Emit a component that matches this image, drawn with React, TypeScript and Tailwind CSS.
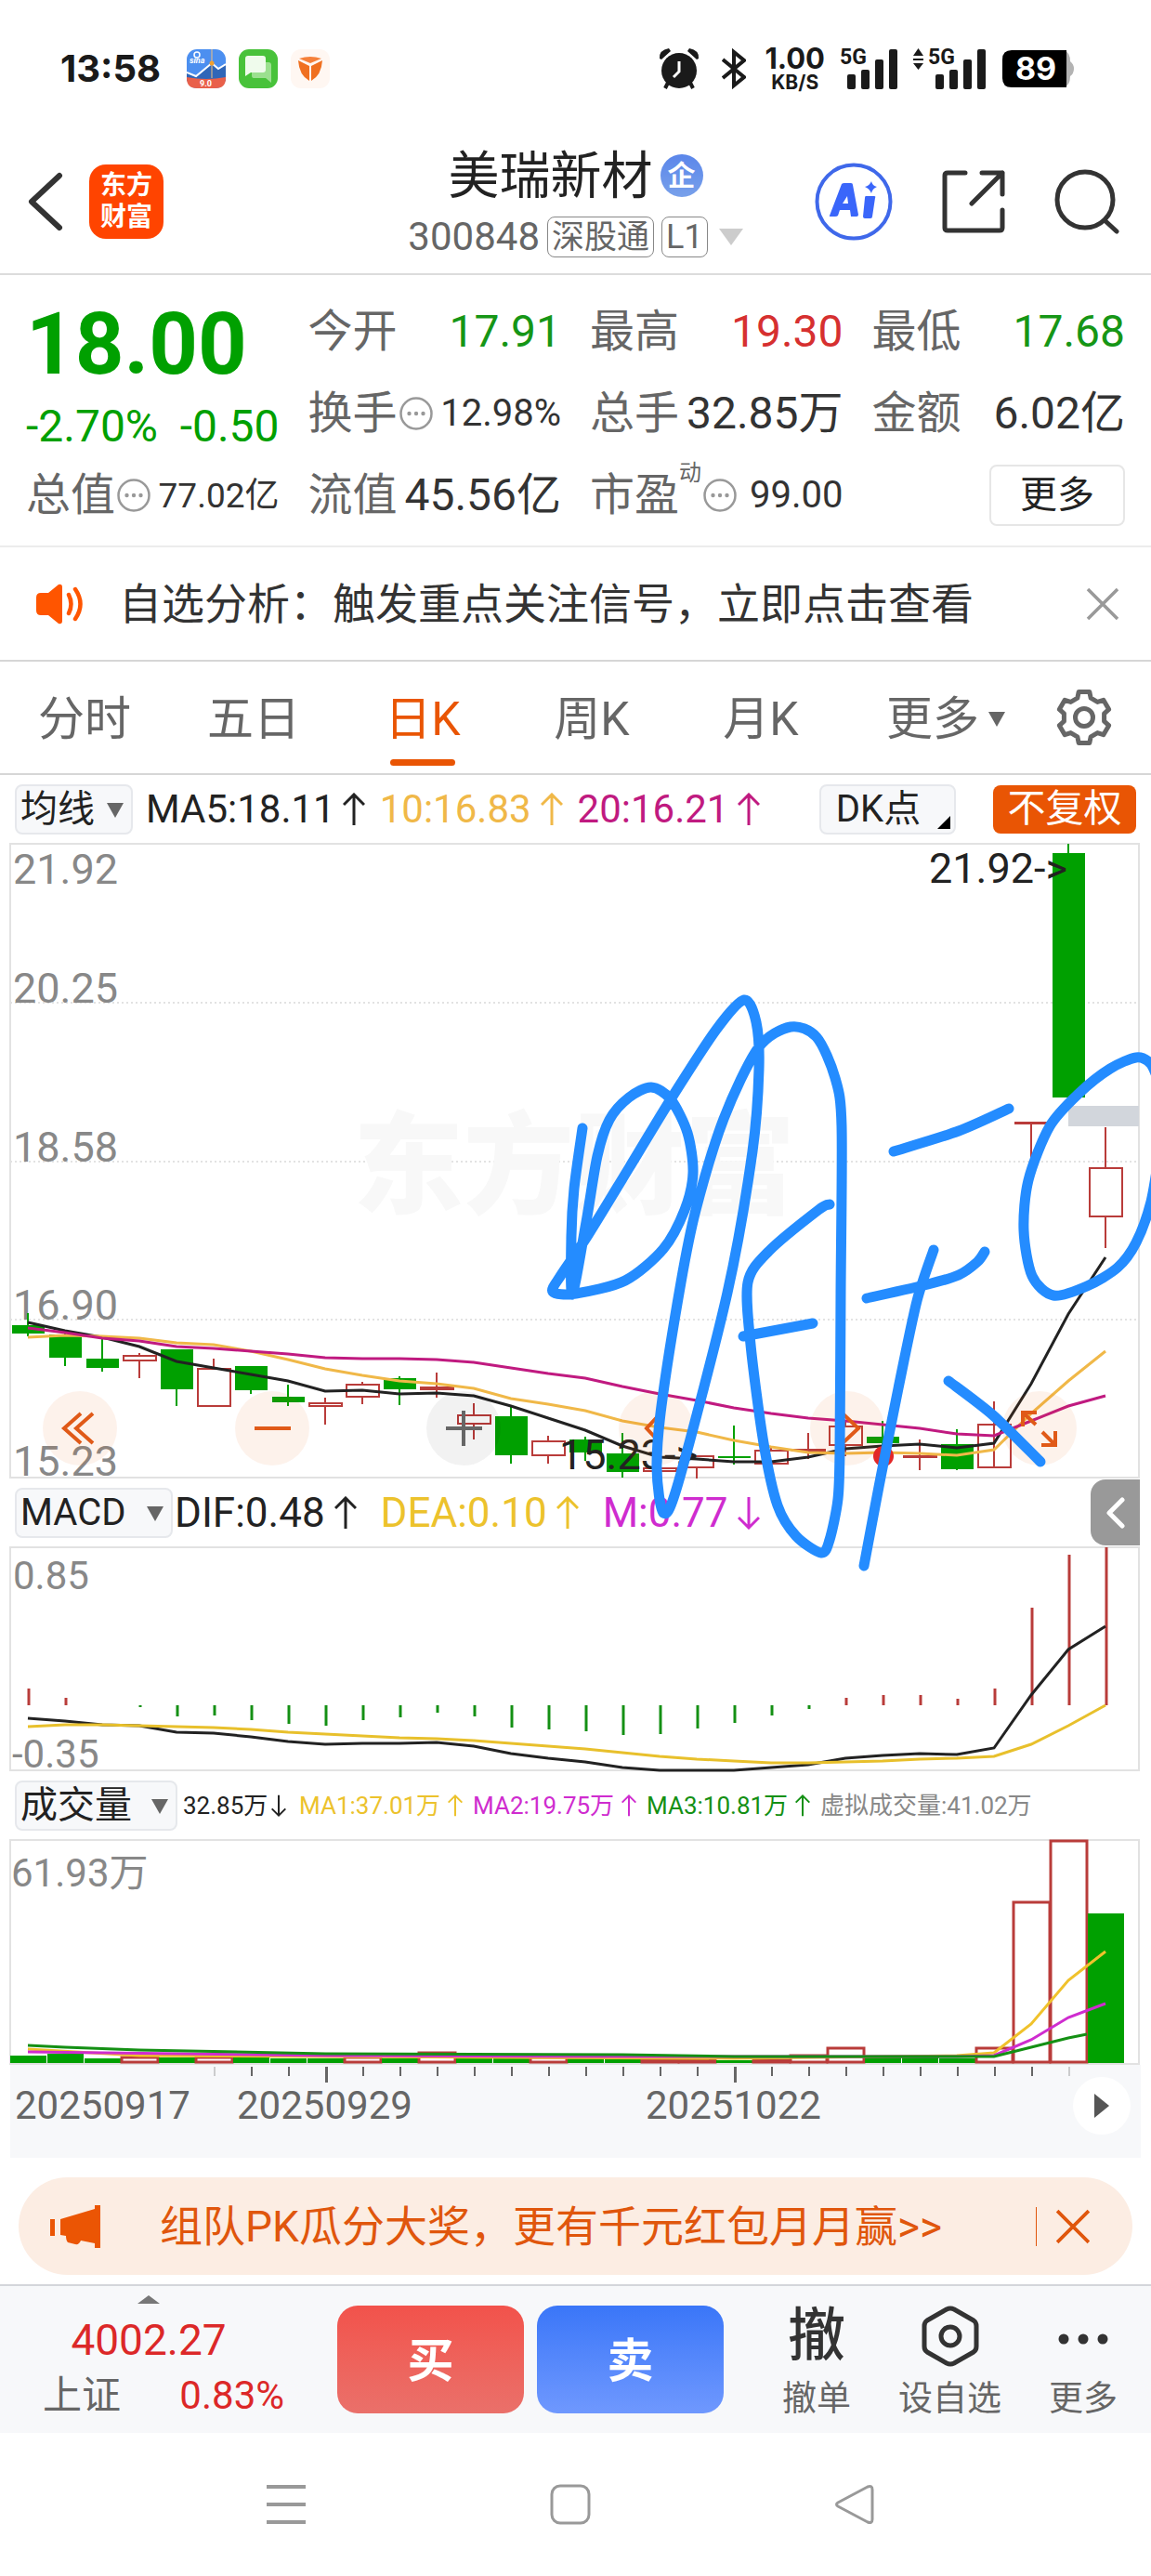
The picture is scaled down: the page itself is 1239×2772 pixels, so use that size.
import type { ReactNode } from 'react'

type Point = [number, number]

const GREEN = '#00a000'
const RED = '#b93c3a'

const xAt = (i: number) => 30 + i * 40

// [up, bodyTop, bodyBottom, wickTop, wickBottom]
const candles: [boolean, number, number, number, number][] = [
  [false, 1426, 1435, 1413, 1438],
  [false, 1436, 1461, 1433, 1470],
  [false, 1462, 1472, 1441, 1476],
  [true, 1459, 1464, 1456, 1483],
  [false, 1452, 1495, 1452, 1513],
  [true, 1473, 1513, 1462, 1513],
  [false, 1470, 1496, 1470, 1500],
  [false, 1503, 1509, 1490, 1513],
  [true, 1510, 1513, 1504, 1533],
  [true, 1490, 1503, 1487, 1511],
  [false, 1483, 1495, 1481, 1512],
  [true, 1493, 1495, 1477, 1504],
  [true, 1523, 1532, 1510, 1549],
  [false, 1524, 1566, 1514, 1575],
  [true, 1551, 1566, 1545, 1575],
  [false, 1549, 1563, 1546, 1572],
  [false, 1564, 1584, 1542, 1590],
  [true, 1580, 1583, 1580, 1583],
  [true, 1567, 1579, 1567, 1591],
  [false, 1567, 1569, 1534, 1576],
  [true, 1561, 1575, 1558, 1581],
  [true, 1560, 1561, 1542, 1570],
  [true, 1535, 1555, 1530, 1567],
  [false, 1546, 1553, 1529, 1558],
  [true, 1567, 1568, 1549, 1582],
  [false, 1554, 1581, 1538, 1582],
  [true, 1533, 1579, 1508, 1533],
  [true, 1208, 1209, 1208, 1278],
  [false, 918, 1181, 908, 1183],
  [true, 1257, 1309, 1213, 1343],
]

const ma5 = [1423, 1432, 1439, 1449, 1465, 1472, 1479, 1486, 1497, 1496, 1500, 1499, 1502, 1513, 1526, 1539, 1556, 1568, 1570, 1573, 1573, 1568, 1559, 1556, 1554, 1558, 1553, 1489, 1414, 1353]
const ma10 = [1439, 1437, 1438, 1440, 1445, 1447, 1454, 1463, 1473, 1480, 1486, 1489, 1494, 1505, 1511, 1518, 1529, 1536, 1541, 1550, 1557, 1563, 1564, 1563, 1564, 1566, 1560, 1521, 1486, 1454]
const ma20 = [1429, 1434, 1440, 1443, 1449, 1451, 1454, 1457, 1461, 1462, 1462, 1463, 1466, 1472, 1478, 1483, 1492, 1500, 1507, 1515, 1521, 1526, 1529, 1533, 1537, 1543, 1545, 1529, 1513, 1502]

const macdBars = [1817, 1827, 1835, 1837, 1847, 1846, 1851, 1855, 1857, 1851, 1848, 1843, 1847, 1859, 1861, 1863, 1867, 1866, 1860, 1854, 1846, 1839, 1827, 1824, 1824, 1828, 1817, 1730, 1673, 1665]
const dif = [1849, 1852, 1856, 1857, 1864, 1865, 1869, 1874, 1877, 1876, 1876, 1875, 1879, 1887, 1892, 1896, 1902, 1905, 1905, 1905, 1902, 1899, 1892, 1889, 1887, 1888, 1881, 1824, 1775, 1750]
const dea = [1858, 1856, 1856, 1857, 1858, 1859, 1861, 1864, 1866, 1868, 1870, 1871, 1873, 1876, 1879, 1882, 1886, 1890, 1893, 1895, 1897, 1897, 1896, 1895, 1893, 1892, 1890, 1877, 1857, 1835]

const volumes: [boolean, number][] = [
  [false, 2212], [false, 2210], [false, 2215], [true, 2214], [false, 2214], [true, 2214],
  [false, 2214], [false, 2215], [false, 2215], [true, 2214], [false, 2215], [true, 2209],
  [false, 2214], [false, 2214], [true, 2214], [false, 2215], [false, 2215], [true, 2216],
  [true, 2216], [false, 2217], [true, 2217], [true, 2212], [true, 2204], [false, 2214],
  [false, 2214], [false, 2215], [true, 2204], [true, 2047], [true, 1981], [false, 2059],
]

const volLines: { color: string; points: Point[] }[] = [
  { color: '#f0c22c', points: [[30, 2205], [150, 2212], [350, 2213], [790, 2215], [1030, 2212], [1070, 2209], [1110, 2178], [1150, 2131], [1190, 2100]] },
  { color: '#cf2ccf', points: [[30, 2208], [350, 2212], [670, 2213], [1030, 2213], [1070, 2212], [1110, 2195], [1150, 2171], [1190, 2156]] },
  { color: '#149014', points: [[30, 2201], [70, 2203], [150, 2206], [350, 2210], [670, 2211], [790, 2213], [1070, 2213], [1110, 2203], [1150, 2193], [1170, 2189]] },
]

const strokes: Point[][] = [
  [
    [627, 1214], [618, 1279], [615, 1330], [616, 1393], [631, 1315], [643, 1244], [656, 1205], [677, 1181],
    [701, 1170], [722, 1183], [740, 1219], [746, 1262], [737, 1302], [714, 1344], [673, 1378], [620, 1392],
    [595, 1390], [604, 1372], [633, 1329], [677, 1257], [722, 1183], [771, 1108], [801, 1076], [814, 1100],
    [817, 1150], [810, 1239], [783, 1391], [730, 1596], [714, 1628], [707, 1580], [712, 1513], [733, 1380],
    [749, 1302], [779, 1204], [816, 1128], [851, 1105], [879, 1116], [899, 1160], [906, 1212], [905, 1391],
    [904, 1560], [902, 1613], [893, 1657], [884, 1671], [857, 1653], [837, 1620], [822, 1553], [808, 1447],
    [805, 1380], [828, 1346], [881, 1302], [893, 1296],
  ],
  [[800, 1438], [875, 1424]],
  [[962, 1239], [1032, 1217], [1086, 1193]],
  [[933, 1397], [999, 1382], [1032, 1372], [1052, 1358], [1060, 1347]],
  [[1005, 1345], [987, 1400], [967, 1494], [946, 1600], [930, 1685]],
  [[1021, 1486], [1069, 1523], [1120, 1573]],
  [
    [1246, 1160], [1238, 1144], [1223, 1138], [1195, 1150], [1162, 1176], [1130, 1212], [1107, 1270],
    [1102, 1324], [1111, 1373], [1134, 1394], [1170, 1384], [1203, 1364], [1223, 1337], [1239, 1293], [1248, 1240],
  ],
]

const toPoints = (ys: number[]) => ys.map((y, i) => `${xAt(i)},${y}`).join(' ')

// Catmull-Rom through all points
function smooth(pts: Point[]) {
  let d = `M${pts[0][0]} ${pts[0][1]}`
  for (let i = 0; i < pts.length - 1; i++) {
    const p0 = pts[i - 1] ?? pts[i]
    const p1 = pts[i]
    const p2 = pts[i + 1]
    const p3 = pts[i + 2] ?? p2
    d += `C${p1[0] + (p2[0] - p0[0]) / 7} ${p1[1] + (p2[1] - p0[1]) / 7} ${p2[0] - (p3[0] - p1[0]) / 7} ${p2[1] - (p3[1] - p1[1]) / 7} ${p2[0]} ${p2[1]}`
  }
  return d
}

const gearPath = (() => {
  const pts: string[] = []
  for (let k = 0; k < 6; k++) {
    const base = k * 60 - 90
    for (const [deg, r] of [[-19, 22], [-12, 28], [12, 28], [19, 22]]) {
      const a = ((base + deg) * Math.PI) / 180
      pts.push(`${(32 + r * Math.cos(a)).toFixed(1)} ${(32 + r * Math.sin(a)).toFixed(1)}`)
    }
  }
  return `M${pts.join('L')}Z`
})()

function Arrow({ down = false, small = false }: { down?: boolean; small?: boolean }) {
  return (
    <svg
      viewBox="0 0 24 36"
      className={small ? 'w-4 h-[30px] shrink-0' : 'w-6 h-9 shrink-0'}
      fill="none"
      stroke="currentColor"
      strokeWidth="3"
    >
      {down ? <path d="M12 1V34M1 23L12 34L23 23" /> : <path d="M12 35V2M1 13L12 2L23 13" />}
    </svg>
  )
}

function Dots() {
  return (
    <svg viewBox="0 0 36 36" className="w-9 h-9 ml-[2px] shrink-0" fill="#999">
      <circle cx="18" cy="18" r="16.5" fill="none" stroke="#999" strokeWidth="2.5" />
      <circle cx="10.5" cy="18" r="2.2" />
      <circle cx="18" cy="18" r="2.2" />
      <circle cx="25.5" cy="18" r="2.2" />
    </svg>
  )
}

function Cross({ className }: { className: string }) {
  return (
    <svg viewBox="0 0 36 36" className={className} fill="none" stroke="currentColor" strokeWidth="3.5">
      <path d="M2 2L34 34M34 2L2 34" />
    </svg>
  )
}

function Picker({ label, options, className }: { label: string; options: string[]; className: string }) {
  return (
    <div className={`relative shrink-0 ${className}`}>
      <select
        aria-label={label}
        className="appearance-none w-full h-[54px] pl-1 rounded-lg border-2 border-[#e6e8ec] bg-[#f7f8fa] text-[40px] leading-[50px] text-[#222]"
      >
        {options.map((o) => (
          <option key={o}>{o}</option>
        ))}
      </select>
      <svg viewBox="0 0 18 16" className="absolute right-[10px] top-5 w-[18px] h-4 pointer-events-none" fill="#666">
        <path d="M0 0H18L9 16Z" />
      </svg>
    </div>
  )
}

function Stat({ label, value, tone = 'text-[#333]', size = 'text-[48px]', dots = false, sup }: {
  label: string
  value: string
  tone?: string
  size?: string
  dots?: boolean
  sup?: string
}) {
  return (
    <div className="flex items-center h-[88px] leading-none whitespace-nowrap">
      <span className="text-[48px] text-[#666]">{label}</span>
      {sup && <span className="text-[24px] text-[#666] self-start pt-2">{sup}</span>}
      {dots && <Dots />}
      <span className={`ml-auto ${size} ${tone}`}>{value}</span>
    </div>
  )
}

function Signal({ roaming = false }: { roaming?: boolean }) {
  return (
    <div className="relative w-20 h-11 shrink-0">
      <svg viewBox="0 0 80 44" className="w-20 h-11" fill="#1a1a1a">
        {roaming && <path d="M0 8L5.500 0L11 8ZM0 11H11V13H0ZM0 16H11L5.500 23Z" />}
        <rect x="24" y="28" width="9" height="16" rx="2" />
        <rect x="39" y="23" width="9" height="21" rx="2" />
        <rect x="54" y="12" width="9" height="32" rx="2" />
        <rect x="69" y="1" width="9" height="43" rx="2" />
      </svg>
      <span className="absolute left-4 top-0 text-[23px] leading-5 font-bold">5G</span>
    </div>
  )
}

function StatusBar() {
  return (
    <div className="flex items-center h-[148px] pl-[65px] pr-[82px] text-[#1a1a1a] leading-none">
      <span className="font-[Inter] text-[40px] font-bold">13:58</span>
      <div className="flex gap-[14px] ml-7">
        <svg viewBox="0 0 42 42" className="w-[42px] h-[42px]">
          <rect width="42" height="42" rx="11" fill="#4c8ff0" />
          <path d="M0 25L10 30L27 16L34 21L42 16V34H0Z" fill="#2f66b8" />
          <path d="M0 30Q21 34 42 30V31Q42 42 31 42H11Q0 42 0 31Z" fill="#e9604a" />
          <path d="M27 0V31" stroke="#f0c080" strokeWidth="1" />
          <path d="M0 25L10 29L27 15L34 21L42 16" fill="none" stroke="#fff" strokeWidth="2" />
          <circle cx="27" cy="15" r="2.500" fill="#f0a030" />
          <circle cx="11" cy="6" r="3" fill="none" stroke="#fff" strokeWidth="1.500" />
          <text x="3" y="15" fontSize="9" fontWeight="700" fontStyle="italic" fill="#fff">sina</text>
          <text x="14" y="40" fontSize="9" fontWeight="700" fill="#fff">9.0</text>
        </svg>
        <svg viewBox="0 0 42 42" className="w-[42px] h-[42px]">
          <rect width="42" height="42" rx="11" fill="#48c23a" />
          <path d="M16 14H32Q35 14 35 17V36L29 31H16Q14 31 14 28V16Z" fill="#9be08f" />
          <path d="M10 7H26Q29 7 29 10V22Q29 25 26 25H13L7 29V10Q7 7 10 7Z" fill="#effbec" />
        </svg>
        <svg viewBox="0 0 42 42" className="w-[42px] h-[42px]">
          <rect width="42" height="42" rx="11" fill="#fff7f2" />
          <path d="M9 10Q21 6 33 10L21 15Z" fill="#f5803a" />
          <path d="M8 12L20 18V34Q9 28 8 12Z" fill="#f07020" />
          <path d="M34 12L22 18V34Q33 28 34 12Z" fill="#f07020" />
        </svg>
      </div>

      <svg viewBox="0 0 44 44" className="w-11 h-11 ml-auto" fill="#1a1a1a">
        <path d="M1 11Q0 2 11 0L13 3L3 12ZM43 11Q44 2 33 0L31 3L41 12Z" />
        <circle cx="22" cy="24" r="19" />
        <path d="M10 37L7 43M34 37L37 43" stroke="#1a1a1a" strokeWidth="4" />
        <path d="M22 14V25L16 31" fill="none" stroke="#fff" strokeWidth="3" />
      </svg>
      <svg viewBox="0 0 26 44" className="w-[26px] h-11 ml-6" fill="none" stroke="#1a1a1a" strokeWidth="4">
        <path d="M1 12L24 31L13 40V4L24 13L1 32" />
      </svg>
      <div className="flex flex-col items-center ml-5 font-[Inter] font-bold">
        <span className="text-[31px] leading-[25px]">1.00</span>
        <span className="text-[21px] leading-[19px] pt-1">KB/S</span>
      </div>
      <div className="flex items-center gap-[15px]">
        <Signal />
        <Signal roaming />
      </div>
      <svg viewBox="0 0 78 40" className="w-[78px] h-10 ml-4">
        <path d="M60 0H66Q73 2 73 12Q77 15 77 20Q77 25 73 28Q73 38 66 40H60Z" fill="#b3b3b3" />
        <path d="M10 0H69V40H10Q0 40 0 30V10Q0 0 10 0Z" />
        <text x="36" y="32" fontSize="34" fontWeight="700" fill="#fff" textAnchor="middle" fontFamily="Inter">89</text>
      </svg>
    </div>
  )
}

function Header() {
  return (
    <header className="grid grid-cols-[1fr_auto_1fr] items-center h-[148px] border-b-2 border-[#dcdcdc] px-[30px] pb-2">
      <div className="flex items-center gap-7">
        <button aria-label="返回">
          <svg viewBox="0 0 38 64" className="w-[38px] h-16" fill="none" stroke="#333" strokeWidth="6" strokeLinecap="round" strokeLinejoin="round">
            <path d="M34 4L4 32L34 60" />
          </svg>
        </button>
        <a href="#home" className="flex flex-col items-center justify-center w-20 h-20 rounded-[18px] bg-[#ff4400] text-white text-[28px] leading-[34px] font-bold">
          <span>东方</span>
          <span>财富</span>
        </a>
      </div>

      <div className="flex flex-col items-center pt-[6px] leading-none">
        <div className="flex items-center gap-2">
          <h1 className="text-[55px] leading-[70px] text-[#222]">美瑞新材</h1>
          <span className="flex items-center justify-center w-[46px] h-[46px] rounded-full bg-linear-to-b from-[#5b86ea] to-[#78a0ea] text-white text-[30px] font-bold">企</span>
        </div>
        <div className="flex items-center gap-2 h-[62px] text-[#666]">
          <span className="text-[42px]">300848</span>
          <span className="flex items-center h-11 px-1 border border-[#888] rounded-lg text-[35px]">深股通</span>
          <span className="flex items-center h-11 px-1 border border-[#888] rounded-lg text-[36px]">L1</span>
          <svg viewBox="0 0 26 18" className="w-[26px] h-[18px] ml-1" fill="#ccc">
            <path d="M0 0H26L13 18Z" />
          </svg>
        </div>
      </div>

      <div className="flex items-center justify-end gap-[53px] pr-1">
        <button aria-label="Ai">
          <svg viewBox="0 0 84 84" className="w-[84px] h-[84px]" fill="#3a66fa">
            <circle cx="42" cy="42" r="39.500" fill="none" stroke="#3f68ea" strokeWidth="4" />
            <path fillRule="evenodd" d="M16 57L29 23Q30 22 32 22H39Q41 22 41 24L47 56Q47 58 45 58H39L38 51H27L25 57Q24 58 22 58H17Q15 58 16 57ZM30 44H36L35 36Z" />
            <path d="M55 36H64Q66 36 65 38L62 58Q62 60 60 60H54Q52 60 52 58L54 38Q54 36 55 36Z" />
            <path d="M61 20Q62 25 67 26Q62 28 61 33Q59 28 54 26Q59 25 61 20Z" />
          </svg>
        </button>
        <button aria-label="分享">
          <svg viewBox="0 0 68 68" className="w-[68px] h-[68px]" fill="none" stroke="#333" strokeWidth="5" strokeLinecap="round" strokeLinejoin="round">
            <path d="M25 3H6Q3 3 3 6V62Q3 65 6 65H62Q65 65 65 62V43M43 3H65V26M65 3L32 36" />
          </svg>
        </button>
        <button aria-label="搜索">
          <svg viewBox="0 0 70 70" className="w-[70px] h-[70px]" fill="none" stroke="#333" strokeWidth="5" strokeLinecap="round">
            <circle cx="33" cy="33" r="30" />
            <path d="M54 55L67 67" />
          </svg>
        </button>
      </div>
    </header>
  )
}

function Quote() {
  return (
    <section className="grid grid-cols-4 gap-x-[31px] px-7 pt-[17px] pb-[10px] border-b-2 border-[#ececec]">
      <div className="row-span-2 text-[#00a000] whitespace-nowrap">
        <div className="text-[92px] leading-[116px] font-bold">18.00</div>
        <div className="flex justify-between text-[48px] leading-[60px]">
          <span>-2.70%</span>
          <span>-0.50</span>
        </div>
      </div>
      <Stat label="今开" value="17.91" tone="text-[#169616]" />
      <Stat label="最高" value="19.30" tone="text-[#d63030]" />
      <Stat label="最低" value="17.68" tone="text-[#169616]" />
      <Stat label="换手" value="12.98%" size="text-[40px]" dots />
      <Stat label="总手" value="32.85万" />
      <Stat label="金额" value="6.02亿" />
      <Stat label="总值" value="77.02亿" size="text-[37px]" dots />
      <Stat label="流值" value="45.56亿" />
      <Stat label="市盈" value="99.00" size="text-[40px]" sup="动" dots />
      <div className="flex items-center justify-end h-[88px]">
        <button className="w-[146px] h-[66px] rounded-lg border-2 border-[#e6e6e6] text-[40px] leading-none text-[#222]">更多</button>
      </div>
    </section>
  )
}

function Notice() {
  return (
    <div className="flex items-center h-[123px] pl-[38px] pr-[34px] border-b-2 border-[#d6d6d6] text-[#333]">
      <svg viewBox="0 0 54 44" className="w-[54px] h-11 shrink-0" fill="#ff5500">
        <path d="M6 10H14L25 1Q29 0 29 4V40Q29 44 25 43L14 34H6Q1 34 1 29V15Q1 10 6 10Z" />
        <path d="M36 12Q41 22 36 32M43 6Q54 22 43 38" fill="none" stroke="#ff5500" strokeWidth="4.500" strokeLinecap="round" />
      </svg>
      <a href="#signal" className="flex-1 ml-9 text-[46px] leading-none whitespace-nowrap">自选分析：触发重点关注信号，立即点击查看</a>
      <button aria-label="关闭" className="text-[#999]">
        <Cross className="w-9 h-9" />
      </button>
    </div>
  )
}

const periods = ['分时', '五日', '日K', '周K', '月K']

function Tabs() {
  return (
    <nav className="grid grid-cols-[repeat(5,182fr)_220fr_109fr] h-[122px] border-b-2 border-[#d6d6d6] text-[50px] leading-none text-[#666]">
      {periods.map((p) => (
        <button
          key={p}
          className={`relative flex items-center justify-center pt-1 ${p === '日K' ? 'text-[#e95504]' : ''}`}
        >
          {p}
          {p === '日K' && <span className="absolute bottom-2 w-[70px] h-[7px] rounded-full bg-[#e95504]" />}
        </button>
      ))}
      <button className="flex items-center justify-center gap-[10px] pt-1 pr-1">
        更多
        <svg viewBox="0 0 18 16" className="w-[18px] h-4" fill="#666">
          <path d="M0 0H18L9 16Z" />
        </svg>
      </button>
      <button aria-label="设置" className="flex items-center pl-[5px]">
        <svg viewBox="0 0 64 64" className="w-16 h-16" fill="none" stroke="#666" strokeWidth="5" strokeLinejoin="round">
          <path d={gearPath} />
          <circle cx="32" cy="32" r="9.500" />
        </svg>
      </button>
    </nav>
  )
}

function MaRow() {
  return (
    <div className="flex items-center h-[73px] pl-4 pr-4 text-[42px] leading-none whitespace-nowrap">
      <Picker label="指标" options={['均线', 'BOLL']} className="w-[127px]" />
      <span className="flex items-center gap-2 ml-[14px] text-[#222]">MA5:18.11 <Arrow /></span>
      <span className="flex items-center gap-[10px] ml-4 text-[#f0b848]">10:16.83 <Arrow /></span>
      <span className="flex items-center gap-[10px] ml-4 text-[#c01a80]">20:16.21 <Arrow /></span>
      <button className="relative w-[147px] h-[54px] ml-auto pr-5 rounded-lg border-2 border-[#e6e8ec] bg-[#f7f8fa] text-[40px] text-[#222]">
        DK点
        <svg viewBox="0 0 14 14" className="absolute right-1 bottom-1 w-[14px] h-[14px]">
          <path d="M14 0V14H0Z" />
        </svg>
      </button>
      <button className="w-[154px] h-[52px] ml-10 rounded-lg bg-[#e95504] text-[41px] text-white">不复权</button>
    </div>
  )
}

function Kline() {
  return (
    <svg viewBox="0 907 1239 684" className="block w-full h-auto overflow-visible" fontFamily="Roboto" fontSize="45">
      <g stroke="#e2e2e2" strokeWidth="2" strokeDasharray="2 3">
        <path d="M11 1079H1226M11 1250H1226M11 1420H1226" />
      </g>
      <text x="380" y="1297" fontSize="119" fontWeight="900" fill="#f8f8f8" fontFamily="Noto Sans CJK SC">东方财富</text>
      <rect x="11" y="908" width="1215" height="682" fill="none" stroke="#e2e2e2" strokeWidth="2" />
      <g fill="#888">
        <text x="14" y="951">21.92</text>
        <text x="14" y="1079">20.25</text>
        <text x="14" y="1250">18.58</text>
        <text x="14" y="1420">16.90</text>
        <text x="14" y="1588">15.23</text>
      </g>
      <rect x="1150" y="1190" width="76" height="22" fill="#d2d6dc" />
      {candles.map(([up, top, bottom, hi, lo], i) => {
        const x = xAt(i)
        return up ? (
          <g key={i} fill="none" stroke={RED} strokeWidth="2">
            <path d={`M${x} ${hi}V${top}M${x} ${bottom}V${lo}`} />
            <rect x={x - 17} y={top} width="35" height={bottom - top} />
          </g>
        ) : (
          <g key={i} fill={GREEN}>
            <rect x={x - 1} y={hi} width="2" height={lo - hi} />
            <rect x={x - 17} y={top} width="35" height={bottom - top} />
          </g>
        )
      })}
      <g fill="none" strokeWidth="3">
        <polyline points={toPoints(ma5)} stroke="#222" />
        <polyline points={toPoints(ma10)} stroke="#f0b848" />
        <polyline points={toPoints(ma20)} stroke="#c01a80" />
      </g>
      <circle cx="951" cy="1567" r="11" fill="#e32828" />
      <g fill="#222">
        <text x="1000" y="950">21.92-&gt;</text>
        <text x="602" y="1581">15.23-&gt;</text>
      </g>
    </svg>
  )
}

const tools: { label: string; icon: ReactNode; tone: string }[] = [
  { label: '最左', tone: 'bg-[#e95504]/8 text-[#e05a18]', icon: <path d="M41 24L23 40L41 56M54 24L36 40L54 56" /> },
  { label: '缩小', tone: 'bg-[#e95504]/8 text-[#e05a18]', icon: <path d="M21 40H60" /> },
  { label: '放大', tone: 'bg-black/5 text-[#666]', icon: <path d="M21 40H60M40 21V59" /> },
  { label: '左移', tone: 'bg-[#e95504]/8 text-[#e05a18]', icon: <path d="M44 25L30 40L44 55" /> },
  { label: '右移', tone: 'bg-[#e95504]/8 text-[#e05a18]', icon: <path d="M36 25L52 40L36 55" /> },
  { label: '全屏', tone: 'bg-[#e95504]/8 text-[#e05a18]', icon: <path d="M37 23H22V38M22 23L36 36M42 58H57V43M57 58L43 44" /> },
]

function Tools() {
  return (
    <div className="absolute inset-x-0 bottom-[14px] flex justify-between pl-[46px] pr-20">
      {tools.map((t) => (
        <button key={t.label} aria-label={t.label} className={`w-20 h-20 rounded-full ${t.tone}`}>
          <svg viewBox="0 0 80 80" className="w-20 h-20" fill="none" stroke="currentColor" strokeWidth="4">
            {t.icon}
          </svg>
        </button>
      ))}
    </div>
  )
}

function MacdRow() {
  return (
    <div className="flex items-center h-[73px] pl-4 pr-3 text-[44px] leading-none whitespace-nowrap">
      <Picker label="副图指标" options={['MACD', 'KDJ', 'RSI']} className="w-[170px]" />
      <span className="flex items-center gap-[10px] ml-[2px] text-[#222]">DIF:0.48 <Arrow /></span>
      <span className="flex items-center gap-[10px] ml-[26px] text-[#ecc22c]">DEA:0.10 <Arrow /></span>
      <span className="flex items-center gap-[10px] ml-[26px] text-[#cf2ccf]">M:0.77 <Arrow down /></span>
      <button aria-label="展开" className="flex items-center justify-center w-[53px] h-[71px] ml-auto rounded-l-2xl bg-[#999]">
        <svg viewBox="0 0 20 34" className="w-5 h-[34px]" fill="none" stroke="#fff" strokeWidth="5" strokeLinecap="round" strokeLinejoin="round">
          <path d="M17 3L3 17L17 31" />
        </svg>
      </button>
    </div>
  )
}

function Macd() {
  return (
    <svg viewBox="0 1664 1239 242" className="block w-full h-auto overflow-visible" fontFamily="Roboto" fontSize="42">
      <rect x="11" y="1665" width="1215" height="240" fill="none" stroke="#e2e2e2" strokeWidth="2" />
      <g fill="#888">
        <text x="14" y="1710">0.85</text>
        <text x="13" y="1902">-0.35</text>
      </g>
      {macdBars.map((y, i) => (
        <path key={i} d={`M${xAt(i) + 1} 1835V${y}`} stroke={y < 1835 ? RED : '#149014'} strokeWidth="3" />
      ))}
      <g fill="none" strokeWidth="3">
        <polyline points={toPoints(dif)} stroke="#222" />
        <polyline points={toPoints(dea)} stroke="#e8c02c" />
      </g>
    </svg>
  )
}

function Annotation() {
  return (
    <svg
      viewBox="0 907 1239 800"
      className="absolute inset-x-0 top-0 w-full h-auto pointer-events-none"
      fill="none"
      stroke="#248cff"
      strokeWidth="11"
      strokeLinecap="round"
      strokeLinejoin="round"
    >
      {strokes.map((s, i) => (
        <path key={i} d={smooth(s)} />
      ))}
    </svg>
  )
}

function VolumeRow() {
  return (
    <div className="flex items-center h-[73px] pl-4 text-[26px] leading-none whitespace-nowrap">
      <Picker label="成交指标" options={['成交量', '成交额']} className="w-[175px] mr-[6px]" />
      <span className="flex items-center gap-1 w-[125px] text-[#222]">32.85万 <Arrow small down /></span>
      <span className="flex items-center gap-2 w-[187px] text-[#ecc22c]">MA1:37.01万 <Arrow small /></span>
      <span className="flex items-center gap-2 w-[187px] text-[#cf2ccf]">MA2:19.75万 <Arrow small /></span>
      <span className="flex items-center gap-2 w-[187px] text-[#149014]">MA3:10.81万 <Arrow small /></span>
      <span className="text-[#888]">虚拟成交量:41.02万</span>
    </div>
  )
}

function Volume() {
  return (
    <svg viewBox="0 1979 1239 243" className="block w-full h-auto" fontFamily="Roboto, 'Noto Sans CJK SC'" fontSize="42">
      <rect x="11" y="1980" width="1215" height="241" fill="none" stroke="#e2e2e2" strokeWidth="2" />
      <text x="12" y="2030" fill="#888">61.93万</text>
      {volumes.map(([up, y], i) =>
        up ? (
          <rect key={i} x={xAt(i) - 19} y={y} width="39" height={2219 - y} fill="#fff" stroke={RED} strokeWidth="3" />
        ) : (
          <rect key={i} x={xAt(i) - 19} y={y} width="39" height={2220 - y} fill={GREEN} />
        ),
      )}
      {volLines.map((l) => (
        <polyline key={l.color} points={l.points.join(' ')} fill="none" stroke={l.color} strokeWidth="3" />
      ))}
    </svg>
  )
}

function DateAxis() {
  const ticks = Array.from({ length: 24 }, (_, i) => 231 + i * 40)
  return (
    <div className="relative mx-[11px] bg-[#f7f8fa]">
      <svg viewBox="11 2222 1217 100" className="block w-full h-auto" fontFamily="Roboto" fontSize="42" fill="#666">
        {ticks.map((x, i) => {
          const major = x === 351 || x === 791
          const faded = i === 0 || i === ticks.length - 1
          return <rect key={x} x={x - 1} y="2224" width={major ? 3 : 2} height={major ? 17 : 10} opacity={faded ? 0.3 : 1} />
        })}
        <text x="16" y="2280">20250917</text>
        <text x="255" y="2280">20250929</text>
        <text x="695" y="2280">20251022</text>
      </svg>
      <button aria-label="播放" className="absolute right-[11px] top-[13px] flex items-center justify-center w-[62px] h-[62px] rounded-full bg-white">
        <svg viewBox="0 0 16 26" className="w-4 h-[26px]" fill="#555">
          <path d="M0 0L16 13L0 26Z" />
        </svg>
      </button>
    </div>
  )
}

function Promo() {
  return (
    <div className="flex items-center h-[105px] mx-5 mt-[21px] mb-[10px] pl-[34px] pr-[45px] rounded-full bg-[#fcede3] text-[#e0560c]">
      <svg viewBox="0 0 54 46" className="w-[54px] h-[46px] shrink-0" fill="#eb5504">
        <path d="M0 15H5V33H0ZM11 15L48 4V0H54V46H48V41L33 38Q31 43 27 42L19 40Q17 38 17 33L11 32Z" />
      </svg>
      <a href="#promo" className="ml-16 text-[46px] leading-none whitespace-nowrap">组队PK瓜分大奖，更有千元红包月月赢&gt;&gt;</a>
      <span className="w-px h-[42px] ml-auto mr-5 bg-[#e0560c]" />
      <button aria-label="关闭">
        <Cross className="w-[38px] h-[38px]" />
      </button>
    </div>
  )
}

function BottomBar() {
  return (
    <footer className="flex items-center h-[160px] pl-[46px] pr-9 border-t-2 border-[#d4d6da] bg-[#f7f8fa] leading-none whitespace-nowrap">
      <a href="#index" className="flex flex-col items-center self-stretch w-[260px] pt-[10px] text-[#dc2828]">
        <svg viewBox="0 0 24 9" className="w-6 h-[9px] mr-8" fill="#777">
          <path d="M0 9L12 0L24 9Z" />
        </svg>
        <span className="text-[46px] leading-[78px] mr-8">4002.27</span>
        <span className="flex justify-between w-full text-[42px]">
          <span className="text-[#666]">上证</span>
          <span>0.83%</span>
        </span>
      </a>
      <button className="w-[201px] h-[116px] ml-[57px] pt-1 rounded-[22px] bg-linear-to-b from-[#f2524b] to-[#ea706a] text-white text-[50px] font-bold">买</button>
      <button className="w-[201px] h-[116px] ml-[14px] pt-1 rounded-[22px] bg-linear-to-b from-[#3a76f8] to-[#6f98fe] text-white text-[50px] font-bold">卖</button>
      <div className="flex flex-1 justify-between ml-[63px] pt-[2px] text-[37px] text-[#666]">
        <button className="flex flex-col items-center gap-4">
          <span className="text-[62px] leading-[66px] font-medium text-[#333]">撤</span>
          撤单
        </button>
        <button className="flex flex-col items-center gap-4">
          <svg viewBox="0 0 62 66" className="w-[62px] h-[66px]" fill="none" stroke="#333" strokeWidth="5" strokeLinejoin="round">
            <path d="M27 4Q31 2 35 4L56 16Q59 18 59 22V44Q59 48 56 50L35 62Q31 64 27 62L6 50Q3 48 3 44V22Q3 18 6 16Z" />
            <circle cx="31" cy="33" r="10" />
          </svg>
          设自选
        </button>
        <button className="flex flex-col items-center gap-4">
          <svg viewBox="0 0 56 66" className="w-14 h-[66px]" fill="#333">
            <circle cx="7" cy="36" r="5.500" />
            <circle cx="28" cy="36" r="5.500" />
            <circle cx="49" cy="36" r="5.500" />
          </svg>
          更多
        </button>
      </div>
    </footer>
  )
}

function SystemNav() {
  return (
    <div className="flex items-center justify-between h-[154px] pl-[286px] pr-[297px] text-[#999]">
      <button aria-label="最近任务">
        <svg viewBox="0 0 44 44" className="w-11 h-11" stroke="currentColor" strokeWidth="4">
          <path d="M1 3H43M1 22H43M1 41H43" />
        </svg>
      </button>
      <button aria-label="主页">
        <svg viewBox="0 0 44 44" className="w-11 h-11" fill="none" stroke="currentColor" strokeWidth="3">
          <rect x="2" y="2" width="40" height="40" rx="9" />
        </svg>
      </button>
      <button aria-label="后退">
        <svg viewBox="0 0 44 44" className="w-11 h-11" fill="none" stroke="currentColor" strokeWidth="3" strokeLinejoin="round">
          <path d="M36 3Q41 1 41 6V38Q41 43 36 41L4 24Q1 22 4 20Z" />
        </svg>
      </button>
    </div>
  )
}

export default function App() {
  return (
    <div className="w-full bg-white overflow-hidden font-[Roboto,'Noto_Sans_CJK_SC',sans-serif]">
      <StatusBar />
      <Header />
      <Quote />
      <Notice />
      <Tabs />
      <MaRow />
      <div className="relative">
        <div className="relative">
          <Kline />
          <Tools />
        </div>
        <MacdRow />
        <Macd />
        <Annotation />
      </div>
      <VolumeRow />
      <Volume />
      <DateAxis />
      <Promo />
      <BottomBar />
      <SystemNav />
    </div>
  )
}
